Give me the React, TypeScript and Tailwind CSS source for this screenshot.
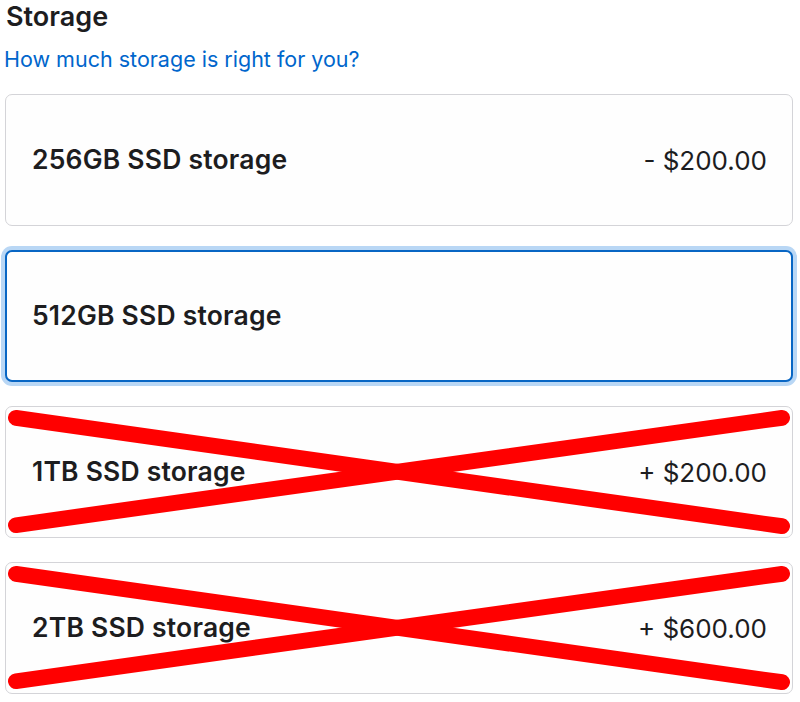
import React from 'react';

type Option = {
  label: string;
  price?: string;
  selected?: boolean;
  unavailable?: boolean;
};

const options: Option[] = [
  { label: '256GB SSD storage', price: '- $200.00' },
  { label: '512GB SSD storage', selected: true },
  { label: '1TB SSD storage', price: '+ $200.00', unavailable: true },
  { label: '2TB SSD storage', price: '+ $600.00', unavailable: true },
];

const CrossOut = () => (
  <svg
    className="absolute inset-0 w-full h-full pointer-events-none"
    viewBox="0 0 788 132"
    preserveAspectRatio="none"
  >
    <line x1="10" y1="120" x2="778" y2="11" stroke="#ff0000" strokeWidth="16" strokeLinecap="round" />
    <line x1="10" y1="11" x2="778" y2="121" stroke="#ff0000" strokeWidth="16" strokeLinecap="round" />
  </svg>
);

const StorageCard = ({ option }: { option: Option }) => (
  <div
    className={
      option.selected
        ? 'relative h-[132px] flex items-center justify-between pl-[25px] pr-[24px] rounded-[7px] border-2 border-[#0866c4] bg-[#fefefe] shadow-[0_0_0_4px_#b9d7f5]'
        : 'relative h-[132px] flex items-center justify-between pl-[26px] pr-[25px] rounded-[7px] border border-[#d4d4d8] bg-[#fefefe]'
    }
  >
    <span className="text-[26.5px] font-semibold text-[#1d1d1f] tracking-[0.2px]">{option.label}</span>
    {option.price && <span className="text-[26px] text-[#1d1d1f]">{option.price}</span>}
    {option.unavailable && <CrossOut />}
  </div>
);

export default function App() {
  return (
    <div className="w-[800px] h-[702px] bg-white pl-[5px] pr-[7px] font-['Inter','Liberation_Sans',sans-serif] overflow-hidden">
      <h2 className="text-[27px] leading-[34px] font-semibold text-[#1d1d1f] pl-[1px]">Storage</h2>
      <a className="block mt-[11px] text-[21.5px] leading-[28px] text-[#0066cc] -ml-[1px]">
        How much storage is right for you?
      </a>
      <div className="mt-[21px] flex flex-col gap-6">
        {options.map(o => (
          <StorageCard key={o.label} option={o} />
        ))}
      </div>
    </div>
  );
}
